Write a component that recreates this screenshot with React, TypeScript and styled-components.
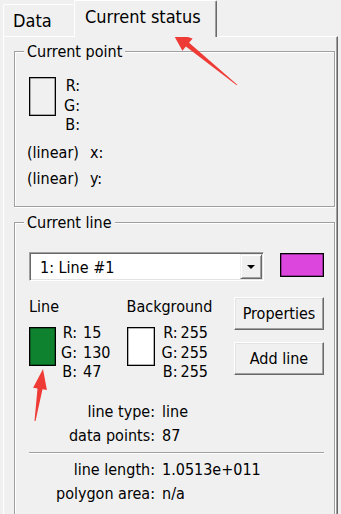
import { Fragment } from "react";
import styled, { createGlobalStyle } from "styled-components";

const GlobalStyle = createGlobalStyle`
  html, body {
    margin: 0;
    padding: 0;
    background: #f0f0f0;
  }
  body {
    font-family: "DejaVu Sans Condensed", "DejaVu Sans", sans-serif;
    color: #000;
  }
`;

const Frame = styled.div`
  position: relative;
  width: 341px;
  height: 514px;
  overflow: hidden;
  background: #f0f0f0;
  font-size: 16px;
`;

const TabStrip = styled.div`
  display: flex;
  align-items: flex-end;
  height: 36px;
  padding-left: 3px;
`;

const Tab = styled.div<{ $active?: boolean }>`
  position: relative;
  z-index: ${(p) => (p.$active ? 2 : 1)};
  box-sizing: border-box;
  width: ${(p) => (p.$active ? 143 : 71)}px;
  height: ${(p) => (p.$active ? 37 : 32)}px;
  margin-bottom: ${(p) => (p.$active ? -1 : 0)}px;
  padding-left: ${(p) => (p.$active ? 10 : 9)}px;
  font-size: 18px;
  line-height: 31px;
  white-space: nowrap;
  background: #f0f0f0;
  border-top: 1px solid #fff;
  border-left: 1px solid #fff;
  border-right: 1px solid ${(p) => (p.$active ? "#696969" : "#f0f0f0")};
  box-shadow: ${(p) => (p.$active ? "inset -1px 0 0 #a0a0a0" : "none")};
  border-radius: 2px 2px 0 0;
`;

const Panel = styled.div`
  box-sizing: border-box;
  margin-left: 3px;
  width: 335px;
  height: 478px;
  padding-left: 10px;
  border-top: 1px solid #fff;
  border-left: 1px solid #fff;
  border-right: 1px solid #696969;
  box-shadow: inset -1px 0 0 #a0a0a0;
`;

const GroupBox = styled.div<{ $top: number; $height: number }>`
  position: relative;
  box-sizing: border-box;
  width: 321px;
  height: ${(p) => p.$height}px;
  margin-top: ${(p) => p.$top}px;
  border: 1px solid #a0a0a0;
  box-shadow: inset 1px 1px 0 #fff, 1px 1px 0 #fff;
`;

const Caption = styled.span`
  position: absolute;
  left: 9px;
  top: -10px;
  padding: 0 3px;
  line-height: 20px;
  background: #f0f0f0;
  white-space: nowrap;
`;

const PointBody = styled.div`
  padding: 24px 0 0 14px;
`;

const ColorRow = styled.div<{ $gap: number }>`
  display: flex;
  align-items: flex-start;
  gap: ${(p) => p.$gap}px;
`;

const Swatch = styled.div<{ $color: string; $w: number; $h: number; $offset?: number }>`
  box-sizing: border-box;
  width: ${(p) => p.$w}px;
  height: ${(p) => p.$h}px;
  margin-top: ${(p) => p.$offset ?? 0}px;
  background: ${(p) => p.$color};
  border: 1px solid #000;
  box-shadow: inset 0 0 0 0.5px rgba(0, 0, 0, 0.6);
  flex-shrink: 0;
`;

const Channels = styled.div<{ $gap: number }>`
  display: grid;
  grid-template-columns: auto auto;
  column-gap: ${(p) => p.$gap}px;
  line-height: 19.5px;
  white-space: nowrap;
`;

const ChannelLabel = styled.span`
  text-align: right;
`;

const LinearRow = styled.div<{ $first?: boolean }>`
  display: grid;
  grid-template-columns: 63px auto;
  padding-left: 12px;
  margin-top: ${(p) => (p.$first ? 5 : 0)}px;
  line-height: 26px;
`;

const LineBody = styled.div`
  padding: 29px 10px 0 14px;
`;

const DropdownRow = styled.div`
  display: flex;
  align-items: flex-start;
  gap: 16px;
`;

const Select = styled.div`
  box-sizing: border-box;
  display: flex;
  width: 235px;
  height: 29px;
  background: #fff;
  border-top: 1px solid #a0a0a0;
  border-left: 1px solid #a0a0a0;
  border-right: 1px solid #fff;
  border-bottom: 1px solid #fff;
  box-shadow: inset 1px 1px 0 #696969, inset -1px -1px 0 #e3e3e3;
  padding: 1px;
`;

const SelectText = styled.div`
  flex: 1;
  padding-left: 9px;
  line-height: 27px;
`;

const SelectButton = styled.div`
  box-sizing: border-box;
  width: 22px;
  height: 100%;
  display: flex;
  align-items: center;
  justify-content: center;
  background: #f0f0f0;
  border-top: 1px solid #f0f0f0;
  border-left: 1px solid #f0f0f0;
  border-right: 1px solid #696969;
  border-bottom: 1px solid #696969;
  box-shadow: inset 1px 1px 0 #fff, inset -1px -1px 0 #a0a0a0;
`;

const DownArrow = styled.span`
  width: 0;
  height: 0;
  border-left: 4px solid transparent;
  border-right: 4px solid transparent;
  border-top: 4px solid #000;
`;

const ColorsRow = styled.div`
  display: flex;
  align-items: flex-start;
  margin-top: 16px;
`;

const ColorColumn = styled.div<{ $width: number }>`
  width: ${(p) => p.$width}px;
`;

const ColumnLabel = styled.div`
  line-height: 20px;
  margin-bottom: 6px;
  white-space: nowrap;
`;

const Buttons = styled.div`
  display: flex;
  flex-direction: column;
  gap: 12px;
`;

const Button = styled.button`
  box-sizing: border-box;
  width: 90px;
  height: 33px;
  padding: 0;
  font: inherit;
  color: #000;
  background: #f0f0f0;
  border-top: 1px solid #fff;
  border-left: 1px solid #fff;
  border-right: 1px solid #696969;
  border-bottom: 1px solid #696969;
  box-shadow: inset -1px -1px 0 #a0a0a0, inset 1px 1px 0 #e3e3e3;
  border-radius: 0;
`;

const InfoGrid = styled.div`
  display: grid;
  grid-template-columns: 126px auto;
  column-gap: 7px;
  margin-top: 18px;
  line-height: 24px;
  white-space: nowrap;
`;

const InfoLabel = styled.span`
  text-align: right;
`;

const Separator = styled.div`
  grid-column: 1 / -1;
  width: 295px;
  margin: 4px 0;
  border-top: 1px solid #a0a0a0;
  border-bottom: 1px solid #fff;
`;

const Annotations = styled.svg`
  position: absolute;
  left: 0;
  top: 0;
  pointer-events: none;
`;

function ChannelList({ values, gap }: { values: string[]; gap: number }) {
  return (
    <Channels $gap={gap}>
      {["R:", "G:", "B:"].map((label, i) => (
        <Fragment key={label}>
          <ChannelLabel>{label}</ChannelLabel>
          <span>{values[i]}</span>
        </Fragment>
      ))}
    </Channels>
  );
}

const info = [
  ["line type:", "line"],
  ["data points:", "87"],
];

const measures = [
  ["line length:", "1.0513e+011"],
  ["polygon area:", "n/a"],
];

function InfoRows({ rows }: { rows: string[][] }) {
  return (
    <>
      {rows.map(([k, v]) => (
        <Fragment key={k}>
          <InfoLabel>{k}</InfoLabel>
          <span>{v}</span>
        </Fragment>
      ))}
    </>
  );
}

export default function App() {
  return (
    <Frame>
      <GlobalStyle />
      <TabStrip>
        <Tab>Data</Tab>
        <Tab $active>Current status</Tab>
      </TabStrip>
      <Panel>
        <GroupBox $top={14} $height={156}>
          <Caption>Current point</Caption>
          <PointBody>
            <ColorRow $gap={8}>
              <Swatch $color="transparent" $w={27} $h={39} $offset={1} />
              <ChannelList values={["", "", ""]} gap={0} />
            </ColorRow>
          </PointBody>
          <LinearRow $first>
            <span>(linear)</span>
            <span>x:</span>
          </LinearRow>
          <LinearRow>
            <span>(linear)</span>
            <span>y:</span>
          </LinearRow>
        </GroupBox>

        <GroupBox $top={15} $height={320}>
          <Caption>Current line</Caption>
          <LineBody>
            <DropdownRow>
              <Select>
                <SelectText>1: Line #1</SelectText>
                <SelectButton>
                  <DownArrow />
                </SelectButton>
              </Select>
              <Swatch $color="#dc46dc" $w={44} $h={24} $offset={1} />
            </DropdownRow>

            <ColorsRow>
              <ColorColumn $width={98}>
                <ColumnLabel>Line</ColumnLabel>
                <ColorRow $gap={5}>
                  <Swatch $color="#0f822f" $w={27} $h={39} $offset={4} />
                  <ChannelList values={["15", "130", "47"]} gap={6} />
                </ColorRow>
              </ColorColumn>
              <ColorColumn $width={108}>
                <ColumnLabel>Background</ColumnLabel>
                <ColorRow $gap={7}>
                  <Swatch $color="#fff" $w={28} $h={39} $offset={4} />
                  <ChannelList values={["255", "255", "255"]} gap={3} />
                </ColorRow>
              </ColorColumn>
              <Buttons>
                <Button>Properties</Button>
                <Button>Add line</Button>
              </Buttons>
            </ColorsRow>

            <InfoGrid>
              <InfoRows rows={info} />
              <Separator />
              <InfoRows rows={measures} />
            </InfoGrid>
          </LineBody>
        </GroupBox>
      </Panel>

      <Annotations width="341" height="514" viewBox="0 0 341 514">
        <polygon
          fill="#ef3b36"
          points="172,32 192.6,38.4 189.1,42.7 237.3,84.7 236.7,85.3 185.9,46.5 182.4,50.8"
        />
        <polygon
          fill="#ef3b36"
          points="43,369 46.9,389.9 42.5,389.2 35.5,421 34.5,421 37.5,388.4 33.1,387.7"
        />
      </Annotations>
    </Frame>
  );
}
